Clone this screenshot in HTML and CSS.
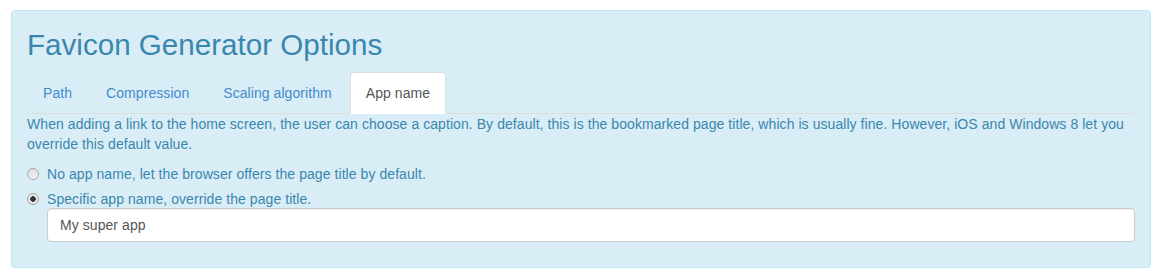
FILE: index.html
```html
<!DOCTYPE html>
<html lang="en">
<head>
  <meta charset="UTF-8">
  <title>Favicon Generator Options</title>
  <link rel="stylesheet" href="styles.css">
</head>
<body>
  <div class="options-box">
    <h2>Favicon Generator Options</h2>

    <ul class="nav-tabs">
      <li><a href="#path">Path</a></li>
      <li><a href="#compression">Compression</a></li>
      <li><a href="#scaling">Scaling algorithm</a></li>
      <li class="active"><a href="#app-name">App name</a></li>
    </ul>

    <div class="tab-pane">
      <p>When adding a link to the home screen, the user can choose a caption. By default, this is the bookmarked page title, which is usually fine. However, iOS and Windows 8 let you override this default value.</p>

      <div class="radio">
        <label>
          <input type="radio" name="app_name" value="none">
          <span>No app name, let the browser offers the page title by default.</span>
        </label>
      </div>
      <div class="radio radio-last">
        <label>
          <input type="radio" name="app_name" value="specific" checked>
          <span>Specific app name, override the page title.</span>
        </label>
        <input type="text" class="form-control" value="My super app">
      </div>
    </div>
  </div>
</body>
</html>
```

FILE: styles.css
```css
body { margin: 10px 11px; font-family: "Liberation Sans", Arial, sans-serif; font-size: 14px; line-height: 20px; letter-spacing: 0.065px; color: #333; background: #fff; }
.options-box { padding: 15px; background-color: #d9edf7; border: 1px solid #bce8f1; border-radius: 4px; color: #3a87ad; }
.options-box h2 { margin: 2px 0 11px; font-size: 29.6px; font-weight: 500; line-height: 33px; letter-spacing: 0; color: #3a87ad; }

.nav-tabs { display: flex; margin: 0; padding: 0; list-style: none; border-bottom: 1px solid #ddd; }
.nav-tabs li { margin: 0 2px -1px 0; }
.nav-tabs a { display: block; padding: 10px 15px; border: 1px solid transparent; border-radius: 4px 4px 0 0; color: #428bca; text-decoration: none; }
.nav-tabs .active a { background-color: #fff; border-color: #ddd #ddd transparent; color: #555; }

.tab-pane p { margin: 0 0 10px; }

.radio { margin: 10px 0; }
.radio + .radio { margin-top: -5px; }
.radio label { display: flex; align-items: center; }
.radio input[type=radio] { appearance: none; -webkit-appearance: none; box-sizing: border-box; width: 12px; height: 12px; margin: 0 8px 0 0; border: 1px solid #a8a8a8; border-radius: 50%; background: linear-gradient(#dcdcdc, #f4f4f4); }
.radio input[type=radio]:checked { background: radial-gradient(circle, #333 0, #333 2.5px, #e2e2e2 3px, #f2f2f2 100%); }

.form-control { display: block; box-sizing: border-box; width: calc(100% - 20px); height: 34px; margin: -1px 0 0 20px; padding: 6px 12px; font-family: inherit; font-size: 14px; letter-spacing: 0.065px; color: #555; background: #fff; border: 1px solid #ccc; border-radius: 4px; box-shadow: inset 0 1px 1px rgba(0,0,0,0.075); }
```
